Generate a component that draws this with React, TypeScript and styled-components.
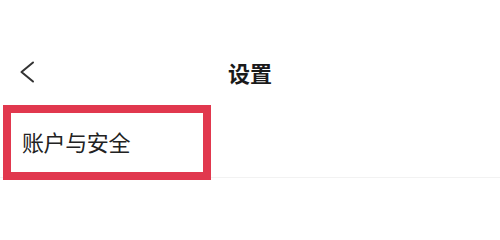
import React from "react";
import styled, { createGlobalStyle } from "styled-components";

const Global = createGlobalStyle`
  html, body { margin: 0; padding: 0; background: #ffffff; }
  body { font-family: "Noto Sans CJK SC", "Noto Sans", sans-serif; }
`;

const Page = styled.div`
  width: 500px;
  height: 206px;
  background: #ffffff;
  overflow: hidden;
  display: flex;
  flex-direction: column;
`;

const Header = styled.header`
  position: relative;
  height: 52px;
  margin-top: 46px;
  display: flex;
  align-items: center;
  justify-content: center;
`;

const BackButton = styled.button`
  position: absolute;
  left: 16px;
  top: 12px;
  width: 22px;
  height: 28px;
  padding: 0;
  border: none;
  background: transparent;
  display: flex;
  align-items: center;
  justify-content: center;
`;

const Title = styled.h1`
  margin: 0;
  font-size: 22px;
  font-weight: 700;
  color: #1a1a1a;
  line-height: 1;
`;

const List = styled.div`
  margin-top: 7px;
`;

const Row = styled.div`
  position: relative;
  height: 72px;
  display: flex;
  align-items: center;
  padding-left: 22px;
  border-bottom: 1px solid #f2f2f2;
`;

const Label = styled.span`
  font-size: 22px;
  font-weight: 400;
  color: #222222;
  line-height: 1;
  letter-spacing: -0.4px;
`;

const Highlight = styled.div`
  position: absolute;
  left: 3px;
  top: 0;
  width: 208px;
  height: 75px;
  box-sizing: border-box;
  border: 8px solid #e1384e;
  pointer-events: none;
`;

export default function App() {
  return (
    <Page>
      <Global />
      <Header>
        <BackButton aria-label="返回">
          <svg width="16" height="22" viewBox="0 0 16 22" fill="none">
            <path
              d="M14 1.5 L2.5 11 L14 20.5"
              stroke="#333333"
              strokeWidth="2"
              strokeLinecap="round"
              strokeLinejoin="round"
            />
          </svg>
        </BackButton>
        <Title>设置</Title>
      </Header>
      <List>
        <Row>
          <Label>账户与安全</Label>
          <Highlight />
        </Row>
      </List>
    </Page>
  );
}
